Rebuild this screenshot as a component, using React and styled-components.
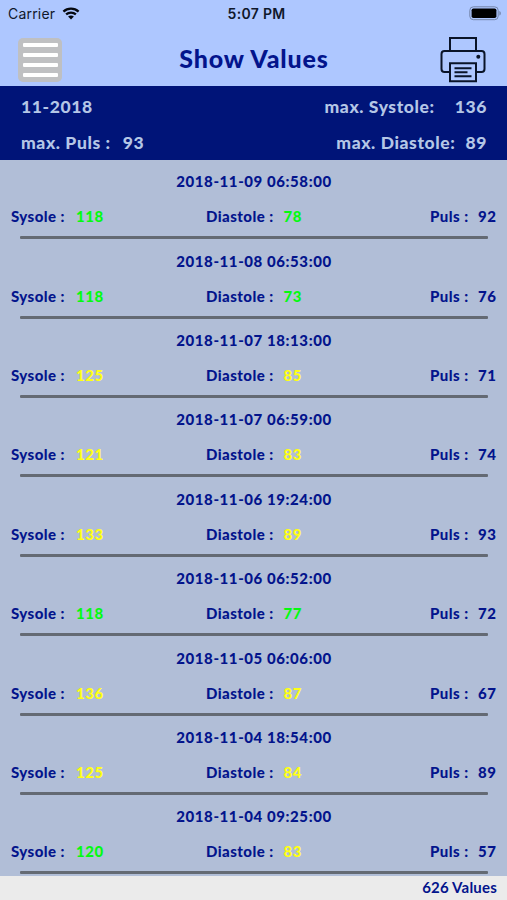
import React, { Component } from "react";
import styled, { createGlobalStyle } from "styled-components";

const GlobalStyle = createGlobalStyle`
  body {
    margin: 0;
    background-color: #b1bed7;
  }
`;

const Container = styled.main`
  width: 507px;
  height: 900px;
  display: flex;
  flex-direction: column;
  overflow: hidden;
  background-color: #b1bed7;
  color: #03148c;
  font-family: Lato, "Liberation Sans", sans-serif;
`;

const Header = styled.header`
  flex: none;
  height: 86px;
  background-color: #aec7ff;
`;

const StatusBar = styled.div`
  height: 27px;
  display: grid;
  grid-template-columns: 1fr auto 1fr;
  align-items: center;
  padding: 0 5px 0 8px;
  color: #10182b;
  font-family: Inter, sans-serif;
  font-size: 14px;
`;

const Carrier = styled.div`
  display: flex;
  align-items: center;
  gap: 7px;
  letter-spacing: 0.2px;
`;

const Clock = styled.div`
  padding-left: 3px;
  font-size: 14px;
  font-weight: 600;
  letter-spacing: 0.3px;
`;

const BatteryIcon = styled.svg`
  justify-self: end;
`;

const NavBar = styled.div`
  height: 59px;
  display: grid;
  grid-template-columns: 1fr auto 1fr;
  align-items: center;
  padding: 0 21px 0 18px;
`;

const MenuButton = styled.button`
  width: 44px;
  height: 44px;
  display: flex;
  flex-direction: column;
  align-items: center;
  justify-content: center;
  gap: 5.7px;
  padding: 0;
  margin-top: 7px;
  border: none;
  border-radius: 5px;
  background-color: #bfc0c2;
`;

const MenuLine = styled.span`
  width: 35px;
  height: 4px;
  border-radius: 1px;
  background-color: #fff;
`;

const Title = styled.h1`
  margin: 3px 0 0 4px;
  font-size: 25px;
  line-height: 30px;
  font-weight: 900;
  letter-spacing: 0.85px;
`;

const PrintButton = styled.button`
  justify-self: end;
  width: 46px;
  height: 46px;
  padding: 0;
  margin-top: 6px;
  border: none;
  background-color: transparent;
`;

const Summary = styled.section`
  flex: none;
  height: 74px;
  box-sizing: border-box;
  display: flex;
  flex-direction: column;
  gap: 12px;
  padding: 9px 20px 0 21px;
  background-color: #001478;
  color: #b4c6e6;
  font-size: 17.5px;
  line-height: 24px;
  font-weight: 900;
`;

const SummaryLine = styled.div`
  display: flex;
  justify-content: space-between;
  letter-spacing: 0.6px;
`;

const SummaryValue = styled.span`
  margin-left: ${(props) => props.$gap}px;
`;

const List = styled.section`
  flex: none;
  height: 715.5px;
`;

const Row = styled.article`
  height: 79.4px;
  box-sizing: border-box;
  padding-top: 11.3px;
  font-size: 15px;
  line-height: 20px;
  font-weight: 900;
`;

const DateText = styled.div`
  padding-left: 1px;
  text-align: center;
  letter-spacing: 0.58px;
`;

const Measures = styled.div`
  display: grid;
  grid-template-columns: 195px 224px 1fr;
  padding: 15px 0 10px 11px;
`;

const Measure = styled.div`
  display: flex;
`;

const Label = styled.span`
  width: ${(props) => props.$width}px;
  letter-spacing: 0.45px;
`;

const Value = styled.span`
  color: ${(props) => props.$color};
  letter-spacing: 0.55px;
`;

const Divider = styled.div`
  height: 3px;
  margin: 0 19px 0 20px;
  border-radius: 1px;
  background-color: #646a73;
`;

const Footer = styled.footer`
  flex: 1;
  padding-right: 10px;
  background-color: #ebebeb;
  font-size: 15px;
  line-height: 23px;
  font-weight: 700;
  letter-spacing: 0.2px;
  text-align: right;
`;

const green = "#04fa10";
const yellow = "#ffff14";

class App extends Component {
  state = {
    values: [
      { date: "2018-11-09 06:58:00", systole: 118, diastole: 78, puls: 92 },
      { date: "2018-11-08 06:53:00", systole: 118, diastole: 73, puls: 76 },
      { date: "2018-11-07 18:13:00", systole: 125, diastole: 85, puls: 71 },
      { date: "2018-11-07 06:59:00", systole: 121, diastole: 83, puls: 74 },
      { date: "2018-11-06 19:24:00", systole: 133, diastole: 89, puls: 93 },
      { date: "2018-11-06 06:52:00", systole: 118, diastole: 77, puls: 72 },
      { date: "2018-11-05 06:06:00", systole: 136, diastole: 87, puls: 67 },
      { date: "2018-11-04 18:54:00", systole: 125, diastole: 84, puls: 89 },
      { date: "2018-11-04 09:25:00", systole: 120, diastole: 83, puls: 57 }
    ]
  };

  render() {
    return (
      <Container>
        <GlobalStyle />
        <Header>
          <StatusBar>
            <Carrier>
              Carrier
              <svg width="18" height="13" viewBox="0 0 18 13" fill="none">
                <path
                  d="M1.4 4.6C5.7.7 12.3.7 16.6 4.6M4.1 7.4c2.8-2.5 7-2.5 9.8 0"
                  stroke="#05080f"
                  strokeWidth="2.3"
                />
                <path d="M9 12.5 6.1 9.6c1.7-1.4 4.1-1.4 5.8 0z" fill="#05080f" />
              </svg>
            </Carrier>
            <Clock>5:07 PM</Clock>
            <BatteryIcon width="33" height="15" viewBox="0 0 33 15">
              <rect
                x="0.8"
                y="0.8"
                width="28.4"
                height="12.9"
                rx="3.6"
                fill="none"
                stroke="#7485aa"
              />
              <rect x="2.6" y="2.5" width="24.8" height="9.5" rx="1.8" fill="#000" />
              <path d="M30.4 5c1.9.6 1.9 4 0 4.6z" fill="#7485aa" />
            </BatteryIcon>
          </StatusBar>
          <NavBar>
            <MenuButton aria-label="Menu">
              <MenuLine />
              <MenuLine />
              <MenuLine />
              <MenuLine />
            </MenuButton>
            <Title>Show Values</Title>
            <PrintButton aria-label="Print">
              <svg
                width="46"
                height="46"
                viewBox="0 0 46 46"
                fill="none"
                stroke="#0a1428"
                strokeWidth="2"
              >
                <path d="M10 14V1h26v13" />
                <path d="M10 35H4.500a3 3 0 0 1-3-3V17a3 3 0 0 1 3-3h37a3 3 0 0 1 3 3V32a3 3 0 0 1-3 3H36" />
                <path d="M10 26.200h26v18H10z" />
                <path d="M14.500 31.200h17M14.500 35.200h13M14.500 39.200h17" />
                <circle cx="38.300" cy="19.800" r="2" fill="#0a1428" stroke="none" />
              </svg>
            </PrintButton>
          </NavBar>
        </Header>

        <Summary>
          <SummaryLine>
            <span>11-2018</span>
            <span>
              max. Systole:
              <SummaryValue $gap={20}>136</SummaryValue>
            </span>
          </SummaryLine>
          <SummaryLine>
            <span>
              max. Puls :<SummaryValue $gap={12}>93</SummaryValue>
            </span>
            <span>
              max. Diastole:
              <SummaryValue $gap={10}>89</SummaryValue>
            </span>
          </SummaryLine>
        </Summary>

        <List>
          {this.state.values.map((item, index) => (
            <Row key={index}>
              <DateText>{item.date}</DateText>
              <Measures>
                <Measure>
                  <Label $width={65}>Sysole :</Label>
                  <Value $color={item.systole > 120 ? yellow : green}>
                    {item.systole}
                  </Value>
                </Measure>
                <Measure>
                  <Label $width={77.5}>Diastole :</Label>
                  <Value $color={item.diastole > 80 ? yellow : green}>
                    {item.diastole}
                  </Value>
                </Measure>
                <Measure>
                  <Label $width={48}>Puls :</Label>
                  <Value>{item.puls}</Value>
                </Measure>
              </Measures>
              <Divider />
            </Row>
          ))}
        </List>

        <Footer>626 Values</Footer>
      </Container>
    );
  }
}
export default App;
